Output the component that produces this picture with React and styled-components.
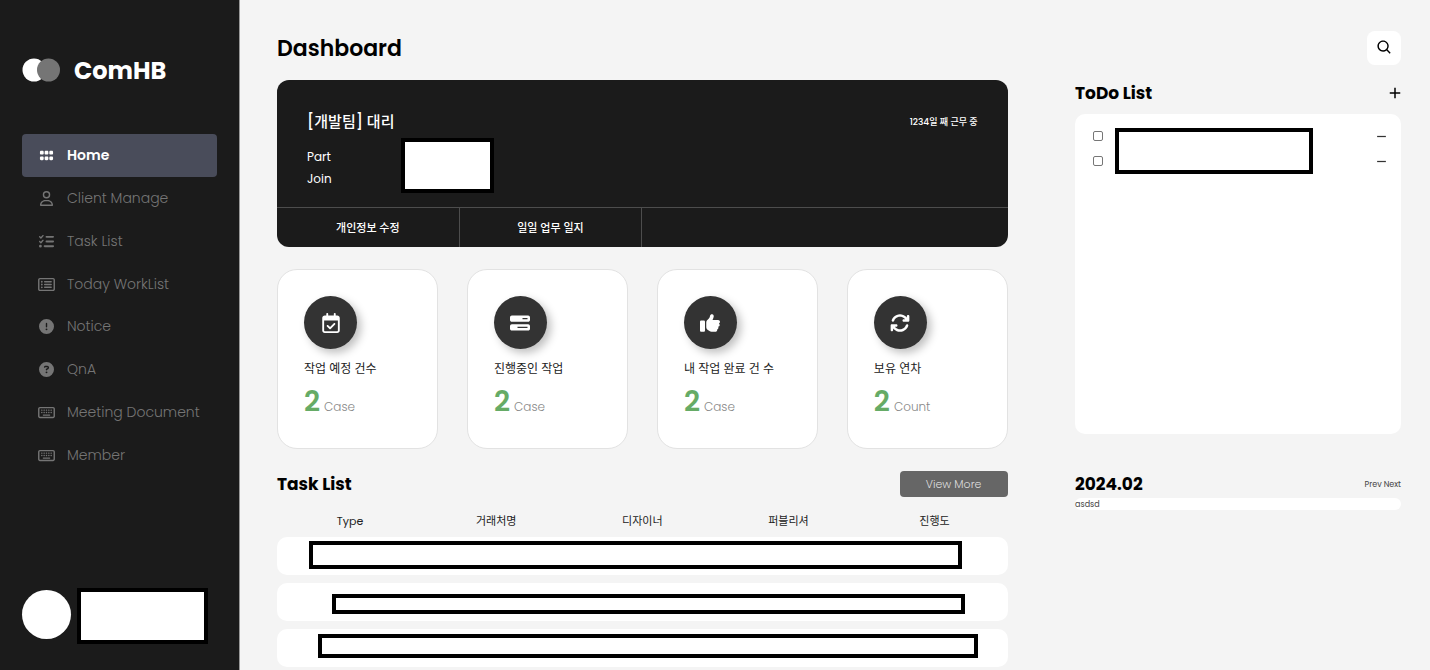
import React from "react";
import styled, { createGlobalStyle } from "styled-components";
import {
  FaGrip,
  FaRegUser,
  FaListCheck,
  FaRegRectangleList,
  FaCircleExclamation,
  FaCircleQuestion,
  FaRegKeyboard,
  FaRegCalendarCheck,
  FaBarsProgress,
  FaThumbsUp,
  FaArrowsRotate,
} from "react-icons/fa6";
import { BiSearch, BiPlus, BiMinus } from "react-icons/bi";

const GlobalStyle = createGlobalStyle`
  * {
    margin: 0;
    padding: 0;
    box-sizing: border-box;
  }

  body {
    background-color: #f4f4f4;
    color: #000;
    font-family: Poppins, Inter, "Noto Sans CJK KR", sans-serif;
    font-size: 12px;
  }

  button {
    border: none;
    background: none;
    color: inherit;
    font: inherit;
    cursor: pointer;
  }

  a {
    color: inherit;
    text-decoration: none;
  }

  ul {
    list-style: none;
  }
`;

const Page = styled.div`
  display: flex;
  min-height: 100vh;
`;

// sidebar
const Sidebar = styled.aside`
  display: flex;
  flex-direction: column;
  flex-shrink: 0;
  width: 240px;
  padding: 52px 22px 26px;
  background-color: #1b1b1b;
  border-right: 1px solid #999;
`;

const Logo = styled.a`
  display: flex;
  align-items: center;
  gap: 13px;
  height: 36px;
  margin-bottom: 46px;
  color: #fff;
  font-size: 24px;
  font-weight: 700;
`;

const Nav = styled.nav`
  display: grid;
  grid-auto-rows: 1fr;
  height: 342px;
`;

const NavItem = styled.a`
  display: flex;
  align-items: center;
  gap: 12px;
  padding: 1px 0 0 16px;
  border-radius: 4px;
  background-color: ${(props) => (props.$active ? "#494c5a" : "transparent")};
  color: ${(props) => (props.$active ? "#fff" : "#757575")};
  font-size: 14px;
  font-weight: ${(props) => (props.$active ? 600 : 300)};

  svg {
    width: 17px;
    height: 15px;
  }
`;

const Profile = styled.div`
  display: flex;
  align-items: flex-start;
  gap: 6px;
  margin-top: auto;
`;

const Avatar = styled.div`
  width: 49px;
  height: 49px;
  margin-top: 2px;
  border-radius: 50%;
  background-color: #fff;
`;

const MaskBox = styled.div`
  border: 4px solid #000;
  background-color: #fff;
`;

const ProfileMask = styled(MaskBox)`
  width: 131px;
  height: 56px;
`;

// content
const Main = styled.main`
  flex: 1;
  min-width: 0;
  padding: 31px 29px 0 37px;
`;

const TopBar = styled.header`
  display: flex;
  align-items: center;
  justify-content: space-between;
  height: 34px;
  margin-bottom: 15px;
`;

const PageTitle = styled.h1`
  font-size: 22px;
  font-weight: 600;
`;

const SearchButton = styled.button`
  display: flex;
  align-items: center;
  justify-content: center;
  width: 34px;
  height: 34px;
  padding-bottom: 2px;
  border-radius: 8px;
  background-color: #fff;
  font-size: 17px;
`;

const Columns = styled.div`
  display: flex;
  align-items: flex-start;
  justify-content: space-between;
`;

const LeftColumn = styled.div`
  width: 65%;
`;

const RightColumn = styled.div`
  width: 29%;
`;

const Hero = styled.section`
  border-radius: 12px;
  background-color: #1b1b1b;
  color: #fff;
  overflow: hidden;
`;

const HeroTop = styled.div`
  display: flex;
  justify-content: space-between;
  height: 127px;
  padding: 30px 30px 0;
`;

const HeroName = styled.h2`
  font-size: 15px;
  font-weight: 500;
  line-height: 24px;
`;

const HeroDays = styled.p`
  font-size: 9px;
  font-weight: 500;
  line-height: 24px;
`;

const HeroInfo = styled.div`
  display: flex;
  align-items: center;
  margin-top: 4px;
`;

const HeroLabels = styled.ul`
  width: 94px;
  padding-top: 4px;
  line-height: 22px;
`;

const HeroMask = styled(MaskBox)`
  width: 93px;
  height: 55px;
`;

const HeroMenu = styled.div`
  display: flex;
  height: 40px;
  border-top: 1px solid #4d4d4d;
`;

const HeroButton = styled.button`
  width: 25%;
  border-right: 1px solid #4d4d4d;
  font-size: 11px;
  font-weight: 500;
`;

const Cards = styled.section`
  display: flex;
  justify-content: space-between;
  margin: 22px 0;
`;

const Card = styled.article`
  width: 22%;
  height: 180px;
  padding: 26px;
  border: 1px solid #e2e2e2;
  border-radius: 20px;
  background-color: #fff;
`;

const CardIcon = styled.div`
  display: flex;
  align-items: center;
  justify-content: center;
  width: 53px;
  height: 53px;
  margin-bottom: 10px;
  border-radius: 50%;
  background-color: #333;
  box-shadow: 4px 4px 8px rgba(0, 0, 0, 0.25);
  color: #fff;
  font-size: 20px;
`;

const CardLabel = styled.h3`
  color: #222;
  font-size: 12px;
  font-weight: 400;
  line-height: 20px;
  white-space: nowrap;
`;

const CardValue = styled.p`
  color: #888;
  font-size: 12px;
  font-weight: 300;
  line-height: 46px;
`;

const CardNumber = styled.strong`
  margin-right: 4px;
  color: #66ab66;
  font-size: 28px;
  font-weight: 600;
`;

const SectionHead = styled.div`
  display: flex;
  align-items: center;
  justify-content: space-between;
  height: 26px;
`;

const SectionTitle = styled.h2`
  font-size: 17px;
  font-weight: 700;
`;

const MoreButton = styled.button`
  width: 108px;
  height: 26px;
  border-radius: 4px;
  background-color: #666;
  color: #ddd;
  font-size: 11px;
  font-weight: 300;
`;

const Table = styled.table`
  width: 100%;
  margin: 3px 0 -8px;
  border-spacing: 0 8px;
  table-layout: fixed;
`;

const Th = styled.th`
  height: 21px;
  padding-top: 5px;
  color: #222;
  font-size: 11px;
  font-weight: 400;
  line-height: 16px;
`;

const Td = styled.td`
  height: 38px;
  border-radius: 10px;
  background-color: #fff;
  vertical-align: top;
`;

const RowMask = styled(MaskBox)`
  height: ${(props) => props.$height}px;
  margin: ${(props) => props.$margin};
`;

// right side
const TodoHead = styled(SectionHead)`
  height: 25px;
  margin-bottom: 9px;
`;

const AddButton = styled.button`
  display: flex;
  margin-right: -3px;
  font-size: 18px;
`;

const TodoPanel = styled.div`
  display: flex;
  align-items: flex-start;
  height: 320px;
  margin-bottom: 37px;
  padding: 14px 12px 0 18px;
  border-radius: 10px;
  background-color: #fff;
`;

const TodoColumn = styled.div`
  display: flex;
  flex-direction: column;
  gap: ${(props) => props.$gap}px;
  padding-top: ${(props) => props.$top}px;
`;

const Check = styled.input`
  appearance: none;
  width: 10px;
  height: 10px;
  border: 1px solid #767676;
  border-radius: 2px;
  background-color: #fff;
`;

const TodoMask = styled(MaskBox)`
  width: 198px;
  height: 46px;
  margin: 0 auto 0 12px;
`;

const RemoveButton = styled.button`
  display: flex;
  color: #333;
  font-size: 15px;
`;

const MonthNav = styled.div`
  display: flex;
  gap: 2px;
  padding-top: 2px;
  color: #444;
  font-size: 8px;
`;

const Memo = styled.p`
  margin-top: 1px;
  padding-top: 1px;
  border-radius: 6px;
  background-color: #fff;
  color: #444;
  font-size: 8px;
  line-height: 11px;
`;

const menus = [
  { name: "Home", icon: <FaGrip /> },
  { name: "Client Manage", icon: <FaRegUser /> },
  { name: "Task List", icon: <FaListCheck /> },
  { name: "Today WorkList", icon: <FaRegRectangleList /> },
  { name: "Notice", icon: <FaCircleExclamation /> },
  { name: "QnA", icon: <FaCircleQuestion /> },
  { name: "Meeting Document", icon: <FaRegKeyboard /> },
  { name: "Member", icon: <FaRegKeyboard /> },
];

const cards = [
  { label: "작업 예정 건수", count: 2, unit: "Case", icon: <FaRegCalendarCheck /> },
  { label: "진행중인 작업", count: 2, unit: "Case", icon: <FaBarsProgress /> },
  { label: "내 작업 완료 건 수", count: 2, unit: "Case", icon: <FaThumbsUp /> },
  { label: "보유 연차", count: 2, unit: "Count", icon: <FaArrowsRotate /> },
];

const columns = ["Type", "거래처명", "디자이너", "퍼블리셔", "진행도"];

const rows = [
  { height: 28, margin: "4px 46px 0 32px" },
  { height: 20, margin: "11px 43px 0 55px" },
  { height: 24, margin: "5px 30px 0 41px" },
];

const App = () => {
  return (
    <>
      <GlobalStyle />
      <Page>
        <Sidebar>
          <Logo href="#">
            <svg width="39" height="24" viewBox="0 0 39 24" aria-hidden="true">
              <circle cx="12" cy="12" r="11.5" fill="#fff" />
              <circle cx="26.5" cy="12" r="11.5" fill="#757575" />
            </svg>
            ComHB
          </Logo>
          <Nav>
            {menus.map((item, i) => (
              <NavItem key={item.name} href="#" $active={i === 0}>
                {item.icon}
                {item.name}
              </NavItem>
            ))}
          </Nav>
          <Profile>
            <Avatar />
            <ProfileMask />
          </Profile>
        </Sidebar>

        <Main>
          <TopBar>
            <PageTitle>Dashboard</PageTitle>
            <SearchButton aria-label="Search">
              <BiSearch />
            </SearchButton>
          </TopBar>

          <Columns>
            <LeftColumn>
              <Hero>
                <HeroTop>
                  <div>
                    <HeroName>[개발팀] 대리</HeroName>
                    <HeroInfo>
                      <HeroLabels>
                        <li>Part</li>
                        <li>Join</li>
                      </HeroLabels>
                      <HeroMask />
                    </HeroInfo>
                  </div>
                  <HeroDays>1234일 째 근무 중</HeroDays>
                </HeroTop>
                <HeroMenu>
                  <HeroButton>개인정보 수정</HeroButton>
                  <HeroButton>일일 업무 일지</HeroButton>
                </HeroMenu>
              </Hero>

              <Cards>
                {cards.map((card) => (
                  <Card key={card.label}>
                    <CardIcon>{card.icon}</CardIcon>
                    <CardLabel>{card.label}</CardLabel>
                    <CardValue>
                      <CardNumber>{card.count}</CardNumber>
                      {card.unit}
                    </CardValue>
                  </Card>
                ))}
              </Cards>

              <SectionHead>
                <SectionTitle>Task List</SectionTitle>
                <MoreButton>View More</MoreButton>
              </SectionHead>
              <Table>
                <thead>
                  <tr>
                    {columns.map((name) => (
                      <Th key={name}>{name}</Th>
                    ))}
                  </tr>
                </thead>
                <tbody>
                  {rows.map((row, i) => (
                    <tr key={i}>
                      <Td colSpan={5}>
                        <RowMask $height={row.height} $margin={row.margin} />
                      </Td>
                    </tr>
                  ))}
                </tbody>
              </Table>
            </LeftColumn>

            <RightColumn>
              <TodoHead>
                <SectionTitle>ToDo List</SectionTitle>
                <AddButton aria-label="Add">
                  <BiPlus />
                </AddButton>
              </TodoHead>
              <TodoPanel>
                <TodoColumn $gap={15} $top={3}>
                  <Check type="checkbox" aria-label="Todo 1" />
                  <Check type="checkbox" aria-label="Todo 2" />
                </TodoColumn>
                <TodoMask />
                <TodoColumn $gap={10} $top={1}>
                  <RemoveButton aria-label="Remove todo 1">
                    <BiMinus />
                  </RemoveButton>
                  <RemoveButton aria-label="Remove todo 2">
                    <BiMinus />
                  </RemoveButton>
                </TodoColumn>
              </TodoPanel>

              <SectionHead>
                <SectionTitle>2024.02</SectionTitle>
                <MonthNav>
                  <button>Prev</button>
                  <button>Next</button>
                </MonthNav>
              </SectionHead>
              <Memo>asdsd</Memo>
            </RightColumn>
          </Columns>
        </Main>
      </Page>
    </>
  );
};

export default App;
